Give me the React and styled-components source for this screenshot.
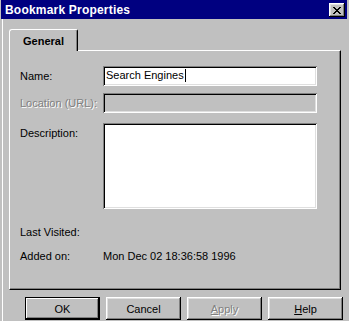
import React from "react";
import styled, { createGlobalStyle, css } from "styled-components";

const GlobalStyle = createGlobalStyle`
  html, body {
    margin: 0;
    padding: 0;
    background: #c0c0c0;
  }
  body {
    font-family: "Liberation Sans", Arial, sans-serif;
    font-size: 11px;
    color: #000;
  }
`;

const raised = css`
  box-shadow: inset -1px -1px 0 #000, inset 1px 1px 0 #fff,
    inset -2px -2px 0 #808080, inset 2px 2px 0 #dfdfdf;
`;

const sunken = css`
  box-shadow: inset 1px 1px 0 #808080, inset -1px -1px 0 #fff,
    inset 2px 2px 0 #000, inset -2px -2px 0 #dfdfdf;
`;

const Window = styled.div`
  width: 350px;
  height: 321px;
  overflow: hidden;
  background: #c0c0c0;
  display: flex;
  flex-direction: column;
  padding: 0 3px 0 1px;
  box-sizing: border-box;
  box-shadow: inset 2px 0 0 #c0c0c0, inset 3px 0 0 #fff, inset -1px 0 0 #fff;
`;

const TitleBar = styled.div`
  height: 19px;
  background: #000080;
  display: flex;
  align-items: center;
  justify-content: space-between;
  padding: 1px 2px 0 4px;
  box-sizing: border-box;
`;

const Title = styled.span`
  color: #fff;
  font-weight: bold;
  font-size: 12px;
  letter-spacing: 0.2px;
`;

const CloseButton = styled.div`
  width: 16px;
  height: 14px;
  background: #c0c0c0;
  ${raised};
  display: flex;
  align-items: center;
  justify-content: center;
`;

const Body = styled.div`
  padding: 10px 0 0 8px;
  display: flex;
  flex-direction: column;
`;

const Tabs = styled.div`
  display: flex;
  height: 21px;
`;

const Tab = styled.div`
  width: 69px;
  height: 22px;
  box-sizing: border-box;
  padding: 5px 0 0 13px;
  font-weight: bold;
  background: #c0c0c0;
  border-top: 1px solid #fff;
  border-left: 1px solid #fff;
  border-right: 1px solid #000;
  border-radius: 3px 2px 0 0;
  box-shadow: inset -1px 0 0 #808080;
  position: relative;
  z-index: 1;
`;

const Panel = styled.div`
  width: 332px;
  height: 240px;
  box-sizing: border-box;
  border-top: 1px solid #fff;
  border-left: 1px solid #fff;
  border-right: 1px solid #000;
  border-bottom: 1px solid #000;
  box-shadow: inset -1px -1px 0 #808080;
  padding: 15px 0 0 10px;
  display: grid;
  grid-template-columns: 83px 214px;
  align-content: start;
`;

const Label = styled.div`
  display: flex;
  align-items: ${(p) => (p.$top ? "flex-start" : "center")};
  padding-top: ${(p) => (p.$top ? "4px" : "0")};
  margin-top: ${(p) => p.$mt || 0}px;
  height: ${(p) => p.$h || 20}px;
  box-sizing: border-box;
  ${(p) =>
    p.$disabled &&
    css`
      color: #808080;
      text-shadow: 1px 1px 0 #fff;
    `}
`;

const Field = styled.div`
  margin-top: ${(p) => p.$mt || 0}px;
  height: ${(p) => p.$h || 20}px;
  background: ${(p) => (p.$disabled ? "#c0c0c0" : "#fff")};
  ${sunken};
  box-sizing: border-box;
  padding: 3px 0 0 3px;
  display: flex;
  align-items: flex-start;
  line-height: 13px;
`;

const Caret = styled.span`
  display: inline-block;
  width: 1px;
  height: 13px;
  background: #000;
  margin-left: 1px;
`;

const Value = styled.div`
  display: flex;
  align-items: center;
  margin-top: ${(p) => p.$mt || 0}px;
  height: 13px;
`;

const Buttons = styled.div`
  display: flex;
  gap: 6px;
  padding: 7px 0 0 16px;
`;

const Button = styled.div`
  width: 75px;
  height: 23px;
  box-sizing: border-box;
  background: #c0c0c0;
  display: flex;
  align-items: center;
  justify-content: center;
  ${(p) =>
    p.$default
      ? css`
          box-shadow: inset 0 0 0 1px #000, inset -2px -2px 0 #000,
            inset 2px 2px 0 #fff, inset -3px -3px 0 #808080;
        `
      : raised};
  ${(p) =>
    p.$disabled &&
    css`
      color: #808080;
      text-shadow: 1px 1px 0 #fff;
    `}
`;

const Accel = styled.span`
  text-decoration: underline;
`;

export default function App() {
  return (
    <>
      <GlobalStyle />
      <Window>
        <TitleBar>
          <Title>Bookmark Properties</Title>
          <CloseButton>
            <svg width="8" height="7" viewBox="0 0 8 7" shapeRendering="crispEdges">
              <path
                d="M0 0h2v1h-2zM6 0h2v1h-2zM1 1h2v1h-2zM5 1h2v1h-2zM2 2h4v1h-4zM3 3h2v1h-2zM2 4h4v1h-4zM1 5h2v1h-2zM5 5h2v1h-2zM0 6h2v1h-2zM6 6h2v1h-2z"
                fill="#000"
              />
            </svg>
          </CloseButton>
        </TitleBar>
        <Body>
          <Tabs>
            <Tab>General</Tab>
          </Tabs>
          <Panel>
            <Label>Name:</Label>
            <Field>
              Search Engines
              <Caret />
            </Field>
            <Label $mt={7} $disabled>
              Location (URL):
            </Label>
            <Field $mt={7} $disabled />
            <Label $mt={10} $h={86} $top>
              Description:
            </Label>
            <Field $mt={10} $h={86} />
            <Value $mt={16}>Last Visited:</Value>
            <Value $mt={16} />
            <Value $mt={11}>Added on:</Value>
            <Value $mt={11}>Mon Dec 02 18:36:58 1996</Value>
          </Panel>
          <Buttons>
            <Button $default>OK</Button>
            <Button>Cancel</Button>
            <Button $disabled>
              <Accel>A</Accel>pply
            </Button>
            <Button>
              <Accel>H</Accel>elp
            </Button>
          </Buttons>
        </Body>
      </Window>
    </>
  );
}
